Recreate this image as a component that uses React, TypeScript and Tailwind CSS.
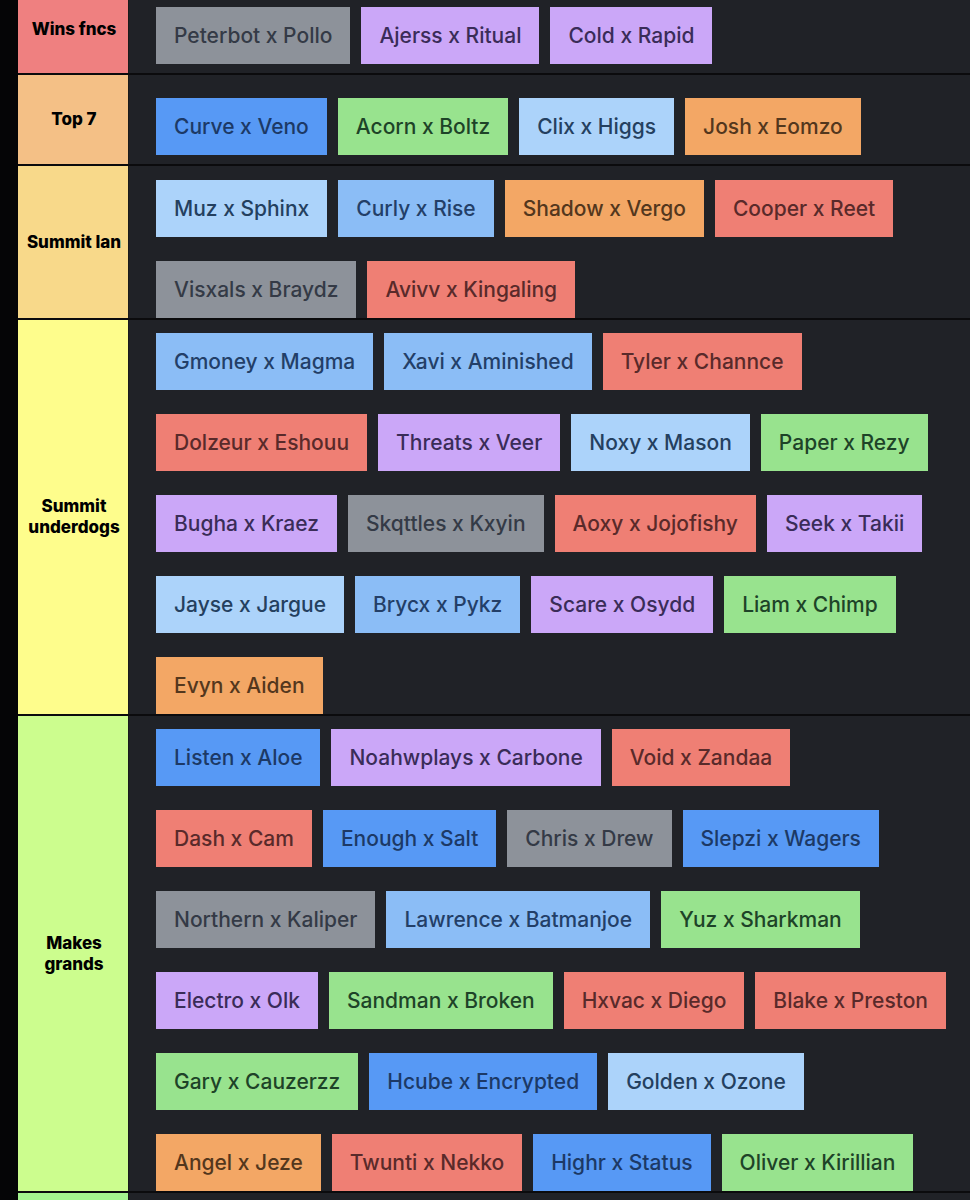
import React from "react";

type C = "gray" | "purple" | "lightblue" | "blue" | "midblue" | "green" | "orange" | "red";

const chipCls: Record<C, string> = {
  gray: "bg-[#8d929a] text-[#343a46]",
  purple: "bg-[#cba7f8] text-[#3a2c58]",
  lightblue: "bg-[#acd3fa] text-[#24405f]",
  blue: "bg-[#5799f5] text-[#1c3966]",
  midblue: "bg-[#8bbdf6] text-[#233f68]",
  green: "bg-[#98e38e] text-[#1e4328]",
  orange: "bg-[#f3a765] text-[#53371d]",
  red: "bg-[#ef7f74] text-[#592a2a]",
};

type Row = {
  label: string[];
  labelBg: string;
  lines: [string, C][][];
};

const rows: Row[] = [
  {
    label: ["Wins fncs"],
    labelBg: "bg-[#ef8080]",
    lines: [[["Peterbot x Pollo", "gray"], ["Ajerss x Ritual", "purple"], ["Cold x Rapid", "purple"]]],
  },
  {
    label: ["Top 7"],
    labelBg: "bg-[#f4c086]",
    lines: [[["Curve x Veno", "blue"], ["Acorn x Boltz", "green"], ["Clix x Higgs", "lightblue"], ["Josh x Eomzo", "orange"]]],
  },
  {
    label: ["Summit lan"],
    labelBg: "bg-[#f8d98a]",
    lines: [
      [["Muz x Sphinx", "lightblue"], ["Curly x Rise", "midblue"], ["Shadow x Vergo", "orange"], ["Cooper x Reet", "red"]],
      [["Visxals x Braydz", "gray"], ["Avivv x Kingaling", "red"]],
    ],
  },
  {
    label: ["Summit", "underdogs"],
    labelBg: "bg-[#fefd8c]",
    lines: [
      [["Gmoney x Magma", "midblue"], ["Xavi x Aminished", "midblue"], ["Tyler x Channce", "red"]],
      [["Dolzeur x Eshouu", "red"], ["Threats x Veer", "purple"], ["Noxy x Mason", "lightblue"], ["Paper x Rezy", "green"]],
      [["Bugha x Kraez", "purple"], ["Skqttles x Kxyin", "gray"], ["Aoxy x Jojofishy", "red"], ["Seek x Takii", "purple"]],
      [["Jayse x Jargue", "lightblue"], ["Brycx x Pykz", "midblue"], ["Scare x Osydd", "purple"], ["Liam x Chimp", "green"]],
      [["Evyn x Aiden", "orange"]],
    ],
  },
  {
    label: ["Makes", "grands"],
    labelBg: "bg-[#ccfd8e]",
    lines: [
      [["Listen x Aloe", "blue"], ["Noahwplays x Carbone", "purple"], ["Void x Zandaa", "red"]],
      [["Dash x Cam", "red"], ["Enough x Salt", "blue"], ["Chris x Drew", "gray"], ["Slepzi x Wagers", "blue"]],
      [["Northern x Kaliper", "gray"], ["Lawrence x Batmanjoe", "midblue"], ["Yuz x Sharkman", "green"]],
      [["Electro x Olk", "purple"], ["Sandman x Broken", "green"], ["Hxvac x Diego", "red"], ["Blake x Preston", "red"]],
      [["Gary x Cauzerzz", "green"], ["Hcube x Encrypted", "blue"], ["Golden x Ozone", "lightblue"]],
      [["Angel x Jeze", "orange"], ["Twunti x Nekko", "red"], ["Highr x Status", "blue"], ["Oliver x Kirillian", "green"]],
    ],
  },
  {
    label: [],
    labelBg: "bg-[#a4f48e]",
    lines: [],
  },
];

export default function App() {
  return (
    <div
      className="w-[970px] h-[1200px] overflow-hidden bg-[#050506] flex"
      style={{ fontFamily: "Inter, 'Noto Sans', sans-serif" }}
    >
      <div className="w-[18px] shrink-0 bg-[#050506]" />
      <div className="flex-1 flex flex-col gap-[2px] bg-[#0b0b0d]">
        {rows.map((row, i) => (
          <div key={i} className={`flex ${i === 0 ? "-mt-[15px]" : ""}`}>
            <div
              className={`w-[111px] shrink-0 ${row.labelBg} flex items-center justify-center text-center border-r border-[#1a1a1a]`}
            >
              <div className="text-[17px] font-extrabold leading-[21px] text-black pl-[2px]">
                {row.label.map((l, j) => (
                  <div key={j}>{l}</div>
                ))}
              </div>
            </div>
            <div
              className={`flex-1 bg-[#202227] pl-[27px] flex flex-col gap-y-[24px] ${
                i === 0 ? "pt-[22px] pb-[9px]" : i === 1 ? "pt-[23px] pb-[9px]" : i === 2 ? "pt-[14px]" : i === 5 ? "h-[60px]" : "pt-[13px]"
              }`}
            >
              {row.lines.map((line, k) => (
                <div key={k} className="flex gap-x-[11px]">
                  {line.map(([t, c]) => (
                    <div
                      key={t}
                      className={`h-[57px] px-[18px] flex items-center text-[21px] font-medium whitespace-nowrap ${chipCls[c]}`}
                    >
                      {t}
                    </div>
                  ))}
                </div>
              ))}
            </div>
          </div>
        ))}
      </div>
    </div>
  );
}
